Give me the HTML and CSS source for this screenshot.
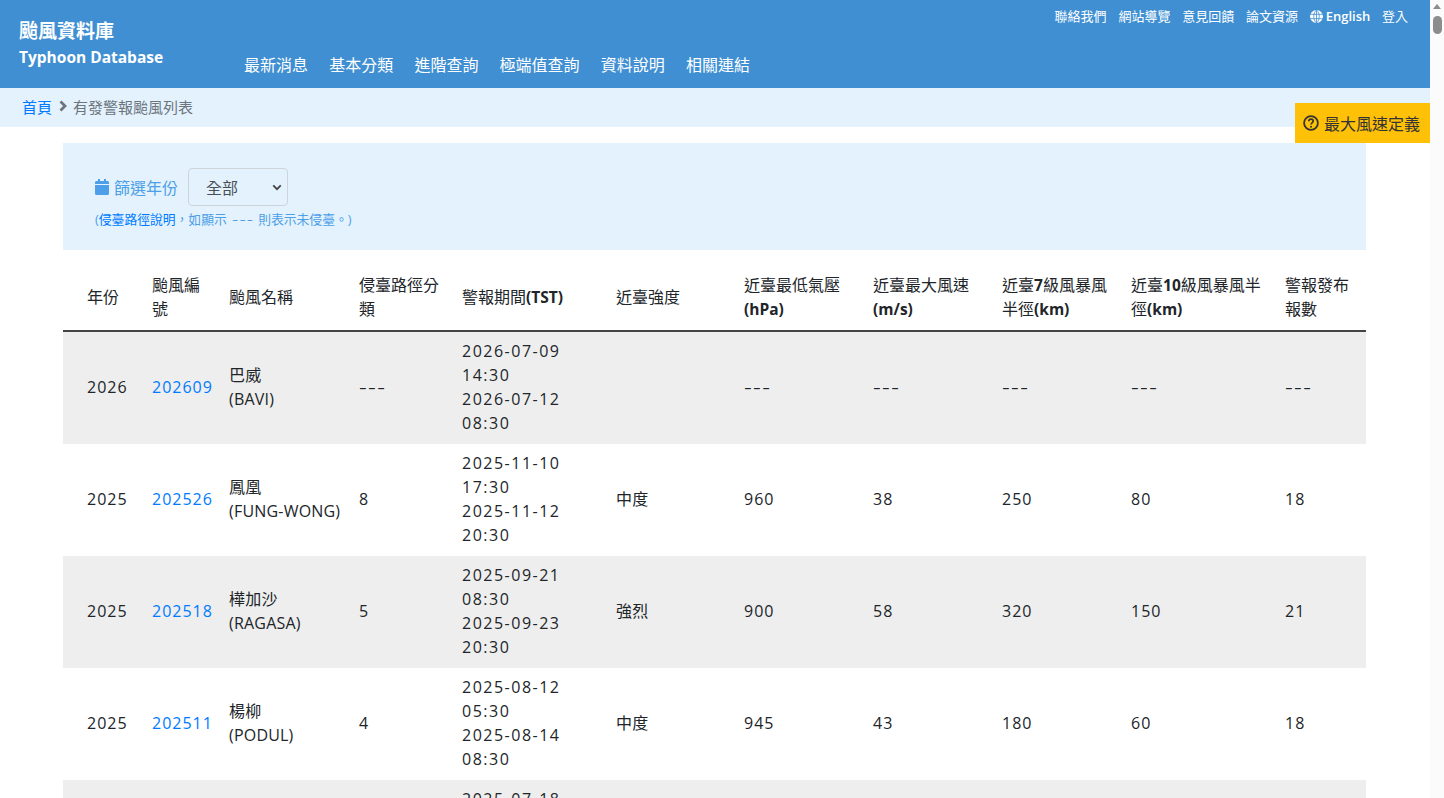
FILE: index.html
```html
<!DOCTYPE html>
<html>
<head>
    <meta charset="UTF-8">
    <title>颱風資料庫</title>
    <link rel="stylesheet" href="styles.css">
</head>
<body>
    <div class="page">
        <header class="site-header">
            <div class="brand">
                <div class="brand-zh">颱風資料庫</div>
                <div class="brand-en">Typhoon Database</div>
            </div>
            <nav class="main-nav">
                <a>最新消息</a>
                <a>基本分類</a>
                <a>進階查詢</a>
                <a>極端值查詢</a>
                <a>資料說明</a>
                <a>相關連結</a>
            </nav>
            <nav class="top-nav">
                <a>聯絡我們</a>
                <a>網站導覽</a>
                <a>意見回饋</a>
                <a>論文資源</a>
                <a class="lang">
                    <svg class="globe" viewBox="0 0 16 16" width="13" height="13">
                        <circle cx="8" cy="8" r="8" fill="#fff"/>
                        <path d="M0 5.3h16M0 10.7h16M8 0v16M8 0C3.5 4 3.5 12 8 16M8 0c4.500 4 4.500 12 0 16" stroke="#3f8fd2" stroke-width="1" fill="none"/>
                    </svg>
                    English
                </a>
                <a>登入</a>
            </nav>
        </header>

        <div class="breadcrumb">
            <a href="#">首頁</a>
            <svg class="crumb-sep" viewBox="0 0 9 12" width="9" height="12">
                <path d="M2.500 1.500 7 6 2.500 10.500" stroke="#6c757d" stroke-width="2.800" fill="none"/>
            </svg>
            <span>有發警報颱風列表</span>
        </div>

        <a class="wind-tab">
            <svg viewBox="0 0 16 16" width="16" height="16">
                <circle cx="8" cy="8" r="6.900" stroke="#333" stroke-width="1.800" fill="none"/>
                <path d="M5.800 6.300C5.900 4.900 6.800 4.200 8 4.200c1.300 0 2.200.8 2.200 1.900 0 1.800-2.200 1.700-2.200 3.500" stroke="#333" stroke-width="1.700" fill="none"/>
                <circle cx="8" cy="11.800" r="1" fill="#333"/>
            </svg>
            最大風速定義
        </a>

        <main class="content">
            <section class="filter-box">
                <div class="filter-row">
                    <svg class="cal" viewBox="0 0 14 16" width="14" height="16">
                        <path d="M0 6h14v8.500c0 .8-.7 1.500-1.500 1.500h-11C.7 16 0 15.300 0 14.500zM3 0h2v2h4V0h2v2h1.500C13.300 2 14 2.700 14 3.500V5H0V3.500C0 2.700.7 2 1.500 2H3z" fill="#4d9fe8"/>
                    </svg>
                    <label class="filter-label">篩選年份</label>
                    <div class="year-select">
                        全部
                        <svg viewBox="0 0 12 8" width="10" height="7">
                            <path d="M1.500 1.500 6 6l4.500-4.500" stroke="#444" stroke-width="2.200" fill="none"/>
                        </svg>
                    </div>
                </div>
                <p class="filter-note">(<a href="#">侵臺路徑說明</a>，如顯示 <span class="dash">---</span> 則表示未侵臺。)</p>
            </section>

            <table class="typhoon-table">
                <colgroup>
                    <col class="c-year"><col class="c-no"><col class="c-name"><col class="c-path"><col class="c-period">
                    <col class="c-level"><col class="c-num"><col class="c-num"><col class="c-num"><col class="c-r10"><col class="c-count">
                </colgroup>
                <thead>
                    <tr>
                        <th>年份</th>
                        <th>颱風編號</th>
                        <th>颱風名稱</th>
                        <th>侵臺路徑分類</th>
                        <th>警報期間<b>(TST)</b></th>
                        <th>近臺強度</th>
                        <th>近臺最低氣壓<b>(hPa)</b></th>
                        <th>近臺最大風速<b>(m/s)</b></th>
                        <th>近臺<b>7</b>級風暴風半徑<b>(km)</b></th>
                        <th>近臺<b>10</b>級風暴風半徑<b>(km)</b></th>
                        <th>警報發布報數</th>
                    </tr>
                </thead>
                <tbody>
                    <tr>
                        <td>2026</td><td><a href="#">202609</a></td><td class="name">巴威<br>(BAVI)</td><td><span class="dash">---</span></td>
                        <td class="period">2026-07-09 14:30<br>2026-07-12 08:30</td><td class="name"></td><td><span class="dash">---</span></td><td><span class="dash">---</span></td><td><span class="dash">---</span></td><td><span class="dash">---</span></td><td><span class="dash">---</span></td>
                    </tr>
                    <tr>
                        <td>2025</td><td><a href="#">202526</a></td><td class="name">鳳凰<br>(FUNG-WONG)</td><td>8</td>
                        <td class="period">2025-11-10 17:30<br>2025-11-12 20:30</td><td class="name">中度</td><td>960</td><td>38</td><td>250</td><td>80</td><td>18</td>
                    </tr>
                    <tr>
                        <td>2025</td><td><a href="#">202518</a></td><td class="name">樺加沙<br>(RAGASA)</td><td>5</td>
                        <td class="period">2025-09-21 08:30<br>2025-09-23 20:30</td><td class="name">強烈</td><td>900</td><td>58</td><td>320</td><td>150</td><td>21</td>
                    </tr>
                    <tr>
                        <td>2025</td><td><a href="#">202511</a></td><td class="name">楊柳<br>(PODUL)</td><td>4</td>
                        <td class="period">2025-08-12 05:30<br>2025-08-14 08:30</td><td class="name">中度</td><td>945</td><td>43</td><td>180</td><td>60</td><td>18</td>
                    </tr>
                    <tr>
                        <td>2025</td><td><a href="#">202505</a></td><td class="name">丹娜絲<br>(DANAS)</td><td>4</td>
                        <td class="period">2025-07-18 05:30<br>2025-07-20 08:30</td><td class="name">中度</td><td>950</td><td>40</td><td>200</td><td>50</td><td>14</td>
                    </tr>
                </tbody>
            </table>
        </main>
    </div>

    <!-- Scrollbar -->
    <div class="scrollbar">
        <div class="scroll-up"></div>
        <div class="scroll-thumb"></div>
    </div>
</body>
</html>
```

FILE: styles.css
```css
html, body {
    margin: 0;
    height: 798px;
    overflow: hidden;
}

body {
    font-family: "Open Sans", "Noto Sans CJK TC", sans-serif;
    font-size: 16px;
    color: #212529;
    background: #fff;
}

a {
    color: #007bff;
    text-decoration: none;
}

.page {
    width: 1430px;
    position: relative;
}

.site-header {
    height: 88px;
    background: #3f8fd2;
    color: #fff;
    display: flex;
    position: relative;
}

.site-header a {
    color: #fff;
}

.brand {
    width: 244px;
    flex-shrink: 0;
    padding: 18px 0 0 19px;
    box-sizing: border-box;
    font-weight: 700;
}

.brand-zh {
    font-size: 19px;
    line-height: 26px;
}

.brand-en {
    font-size: 15.500px;
    line-height: 26px;
}

.main-nav {
    display: flex;
    gap: 21.200px;
    padding-top: 53px;
    font-size: 16px;
    line-height: 24px;
}

.top-nav {
    position: absolute;
    top: 7px;
    right: 22px;
    display: flex;
    gap: 11.750px;
    font-size: 13px;
    line-height: 18px;
}

.lang {
    display: flex;
    align-items: center;
    gap: 3px;
    font-weight: 600;
}

.breadcrumb {
    height: 39px;
    box-sizing: border-box;
    padding: 0 0 3px 22px;
    background: #e3f2fd;
    display: flex;
    align-items: center;
    gap: 6px;
    font-size: 15px;
    color: #6c757d;
}

.wind-tab {
    position: absolute;
    top: 103px;
    right: 0;
    width: 135px;
    height: 40px;
    box-sizing: border-box;
    padding-right: 2px;
    background: #ffc107;
    color: #333;
    display: flex;
    align-items: center;
    justify-content: center;
    gap: 5px;
    font-size: 16px;
}

.content {
    padding: 16px 64px 0 63px;
}

.filter-box {
    height: 107px;
    box-sizing: border-box;
    background: #e3f2fd;
    padding: 25px 0 0 32px;
    color: #4d9fe8;
}

.filter-row {
    display: flex;
    align-items: center;
    height: 38px;
}

.cal {
    margin-right: 5px;
}

.filter-label {
    font-size: 16px;
    margin-right: 10px;
}

.year-select {
    width: 100px;
    height: 38px;
    box-sizing: border-box;
    border: 1px solid #ced4da;
    border-radius: 4px;
    color: #495057;
    font-size: 16px;
    display: flex;
    align-items: center;
    justify-content: space-between;
    padding: 0 5px 0 17px;
}

.filter-note {
    margin: 4px 0 0 0;
    font-size: 12.800px;
    line-height: 19px;
}

.dash {
    display: inline-block;
    transform: scaleX(1.5);
    transform-origin: left;
    letter-spacing: .9px;
}

.filter-note .dash {
    letter-spacing: .8px;
    margin-left: 2px;
    margin-right: 8px;
}

.typhoon-table {
    width: 1303px;
    margin-top: 15px;
    border-collapse: collapse;
    table-layout: fixed;
    line-height: 24px;
}

.c-year { width: 89px; }
.c-no { width: 77px; }
.c-name { width: 130px; }
.c-path { width: 103px; }
.c-period { width: 154px; }
.c-level { width: 128px; }
.c-num { width: 129px; }
.c-r10 { width: 154px; }
.c-count { width: 81px; }

.typhoon-table th {
    text-align: left;
    font-weight: 400;
    padding: 8px 16px 9px 0;
    border-bottom: 2px solid #444;
}

.typhoon-table th b {
    font-weight: 700;
    font-size: 15.500px;
}

.typhoon-table th:first-child,
.typhoon-table td:first-child {
    padding-left: 24px;
}

.typhoon-table td {
    padding: 7px 16px 9px 0;
    height: 96px;
    vertical-align: middle;
    letter-spacing: 1px;
}

.typhoon-table td.name {
    letter-spacing: .2px;
}

.typhoon-table td.period {
    letter-spacing: 1.500px;
}

.typhoon-table tbody tr:nth-child(odd) {
    background: #eee;
}

.scrollbar {
    position: fixed;
    top: 0;
    right: 0;
    bottom: 0;
    width: 14px;
    background: #fbfbfb;
}

.scroll-up {
    width: 0;
    margin: 4px auto 0;
    border: 4px solid transparent;
    border-top: 0;
    border-bottom: 5px solid #8c8c8c;
}

.scroll-thumb {
    width: 9px;
    height: 18px;
    margin: 7px auto 0;
    background: #8c8c8c;
    border-radius: 5px;
}
```
